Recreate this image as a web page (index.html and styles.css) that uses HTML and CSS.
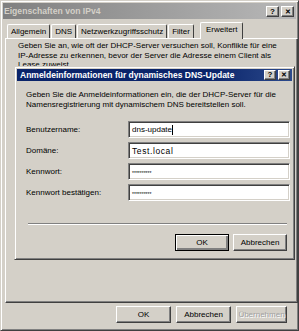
FILE: index.html
```html
<!DOCTYPE html>
<html lang="de">
<head>
    <meta charset="UTF-8">
    <title>Eigenschaften von IPv4</title>
    <link rel="stylesheet" href="styles.css">
</head>
<body>
    <div class="window">
        <!-- Outer title bar (inactive) -->
        <div class="titlebar inactive">
            <span class="title">Eigenschaften von IPv4</span>
            <div class="caption-buttons">
                <span class="cbtn">?</span>
                <span class="cbtn close">&#x2715;</span>
            </div>
        </div>

        <!-- Tabs -->
        <div class="tabs">
            <span class="tab">Allgemein</span>
            <span class="tab">DNS</span>
            <span class="tab">Netzwerkzugriffsschutz</span>
            <span class="tab">Filter</span>
            <span class="tab active">Erweitert</span>
        </div>

        <div class="panel">
            <p class="panel-text">Geben Sie an, wie oft der DHCP-Server versuchen soll, Konflikte für eine IP-Adresse zu erkennen, bevor der Server die Adresse einem Client als Lease zuweist.</p>

            <!-- Modal dialog on top of the tab page -->
            <div class="dialog">
                <div class="titlebar active-title">
                    <span class="title">Anmeldeinformationen für dynamisches DNS-Update</span>
                    <div class="caption-buttons">
                        <span class="cbtn">?</span>
                        <span class="cbtn close">&#x2715;</span>
                    </div>
                </div>
                <div class="dialog-body">
                    <p class="desc">Geben Sie die Anmeldeinformationen ein, die der DHCP-Server für die Namensregistrierung mit dynamischem DNS bereitstellen soll.</p>
                    <div class="form">
                        <label>Benutzername:</label>
                        <div class="field">dns-update<span class="caret"></span></div>
                        <label>Domäne:</label>
                        <div class="field wide">Test.local</div>
                        <label>Kennwort:</label>
                        <div class="field pw">**********</div>
                        <label>Kennwort bestätigen:</label>
                        <div class="field pw">**********</div>
                    </div>
                    <div class="separator"></div>
                    <div class="buttons">
                        <button class="btn default">OK</button>
                        <button class="btn">Abbrechen</button>
                    </div>
                </div>
            </div>
        </div>

        <div class="buttons footer">
            <button class="btn">OK</button>
            <button class="btn">Abbrechen</button>
            <button class="btn disabled">Übernehmen</button>
        </div>
    </div>
</body>
</html>
```

FILE: styles.css
```css
html, body {
    margin: 0;
    padding: 0;
}
body {
    font-family: "Liberation Sans", Arial, sans-serif;
    font-size: 8px;
    color: #000000;
    background-color: #d4d0c8;
}
.window {
    box-sizing: border-box;
    width: 299px;
    height: 331px;
    padding: 2px;
    border: 1px solid;
    border-color: #d4d0c8 #404040 #404040 #d4d0c8;
    box-shadow: inset 1px 1px #ffffff, inset -1px -1px #808080;
    background-color: #d4d0c8;
    display: flex;
    flex-direction: column;
}
.titlebar {
    display: flex;
    align-items: center;
    justify-content: space-between;
    font-weight: bold;
    padding: 0 2px 0 2px;
}
.titlebar.inactive {
    height: 16px;
    background: linear-gradient(to right, #808080, #b8b8b8);
    color: #d4d0c8;
    font-size: 8.6px;
    padding-left: 1px;
}
.titlebar.active-title {
    height: 12px;
    background: linear-gradient(to right, #0a246a 70%, #2c4a8c);
    color: #ffffff;
    font-size: 8.5px;
    padding-left: 3px;
}
.caption-buttons {
    display: flex;
    gap: 2px;
}
.cbtn {
    box-sizing: border-box;
    width: 13px;
    height: 11px;
    background-color: #d4d0c8;
    border: 1px solid;
    border-color: #ffffff #404040 #404040 #ffffff;
    box-shadow: inset -1px -1px #808080;
    color: #000000;
    font-size: 8px;
    font-weight: bold;
    line-height: 9px;
    text-align: center;
}
.active-title .cbtn {
    width: 12px;
    height: 10px;
    line-height: 8px;
}
.cbtn.close {
    font-size: 7px;
}
.tabs {
    display: flex;
    align-items: flex-end;
    height: 17px;
    margin-top: 2px;
    padding-left: 4px;
}
.tab {
    box-sizing: border-box;
    height: 14px;
    padding: 0 3px;
    line-height: 13px;
    border-top: 1px solid #ffffff;
    border-left: 1px solid #ffffff;
    border-right: 1px solid #404040;
    border-top-left-radius: 2px;
    border-top-right-radius: 2px;
    margin-right: 1px;
}
.tab.active {
    height: 17px;
    margin-left: 5px;
    margin-bottom: -1px;
    padding: 0 5px;
    line-height: 14px;
    background-color: #d4d0c8;
    position: relative;
    z-index: 1;
}
.panel {
    position: relative;
    height: 265px;
    margin: 0 0 0 2px;
    width: 293px;
    box-sizing: border-box;
    border: 1px solid;
    border-color: #ffffff #404040 #404040 #ffffff;
    box-shadow: inset -1px -1px #808080;
    padding: 2px 10px 0 12px;
}
.panel-text {
    margin: 0;
    line-height: 9.5px;
}
.dialog {
    position: absolute;
    left: 8px;
    top: 27px;
    width: 281px;
    height: 194px;
    box-sizing: border-box;
    padding: 2px;
    border: 1px solid;
    border-color: #d4d0c8 #404040 #404040 #d4d0c8;
    box-shadow: inset 1px 1px #ffffff, inset -1px -1px #808080;
    background-color: #d4d0c8;
}
.dialog-body {
    padding: 9px 4px 0 9px;
}
.desc {
    margin: 0;
    line-height: 10px;
}
.form {
    display: grid;
    grid-template-columns: 102px 162px;
    grid-auto-rows: 17px;
    row-gap: 4px;
    align-items: center;
    margin-top: 11px;
}
.field {
    box-sizing: border-box;
    height: 17px;
    background-color: #ffffff;
    border: 1px solid;
    border-color: #808080 #ffffff #ffffff #808080;
    box-shadow: inset 1px 1px #404040, inset -1px -1px #d4d0c8;
    padding: 0 3px;
    line-height: 14px;
    display: flex;
    align-items: center;
}
.field.wide {
    letter-spacing: 0.6px;
    font-size: 8.5px;
}
.field.pw {
    font-size: 5px;
    letter-spacing: 0;
    align-items: flex-start;
    padding-top: 2px;
}
.caret {
    display: inline-block;
    width: 1px;
    height: 10px;
    background-color: #000000;
}
.separator {
    margin: 22px 1px 0 2px;
    border-top: 1px solid #808080;
    border-bottom: 1px solid #ffffff;
}
.buttons {
    display: flex;
    justify-content: flex-end;
    gap: 4px;
    margin-top: 9px;
    padding-right: 1px;
}
.btn {
    box-sizing: border-box;
    width: 54px;
    height: 17px;
    padding: 0;
    font-family: inherit;
    font-size: 8px;
    color: #000000;
    background-color: #d4d0c8;
    border: 1px solid;
    border-color: #ffffff #404040 #404040 #ffffff;
    box-shadow: inset -1px -1px #808080;
    border-radius: 0;
}
.btn.default {
    border: 1px solid #000000;
    box-shadow: inset 1px 1px #ffffff, inset -2px -2px #808080, inset -1px -1px #404040;
}
.btn.disabled {
    color: #a0a0a0;
    text-shadow: 1px 1px #ffffff;
}
.footer {
    margin-top: 3px;
    padding-right: 9px;
    gap: 5px;
}
.footer .btn {
    width: 55px;
}
.footer .btn.disabled {
    width: 51px;
}
```
